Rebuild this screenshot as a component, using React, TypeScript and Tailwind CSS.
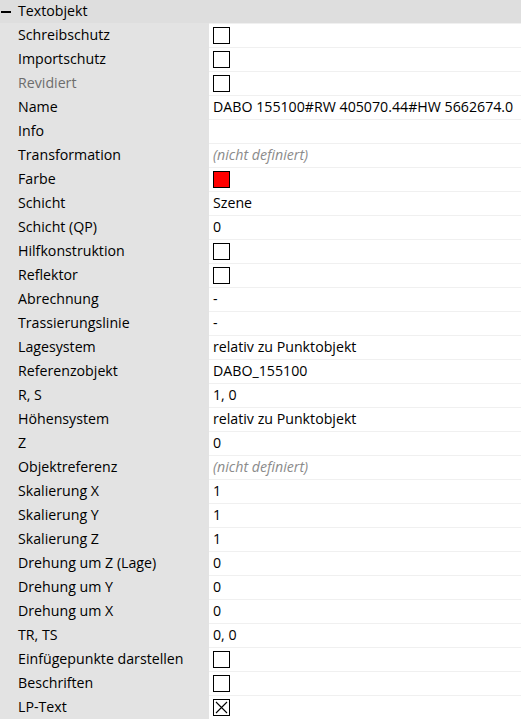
import React from 'react';

type Row = {
    label: string;
    kind: 'text' | 'check' | 'checked' | 'color' | 'undef' | 'empty';
    value?: string;
    muted?: boolean;
};

const rows: Row[] = [
    { label: 'Schreibschutz', kind: 'check' },
    { label: 'Importschutz', kind: 'check' },
    { label: 'Revidiert', kind: 'check', muted: true },
    { label: 'Name', kind: 'text', value: 'DABO 155100#RW 405070.44#HW 5662674.0' },
    { label: 'Info', kind: 'empty' },
    { label: 'Transformation', kind: 'undef' },
    { label: 'Farbe', kind: 'color' },
    { label: 'Schicht', kind: 'text', value: 'Szene' },
    { label: 'Schicht (QP)', kind: 'text', value: '0' },
    { label: 'Hilfkonstruktion', kind: 'check' },
    { label: 'Reflektor', kind: 'check' },
    { label: 'Abrechnung', kind: 'text', value: '-' },
    { label: 'Trassierungslinie', kind: 'text', value: '-' },
    { label: 'Lagesystem', kind: 'text', value: 'relativ zu Punktobjekt' },
    { label: 'Referenzobjekt', kind: 'text', value: 'DABO_155100' },
    { label: 'R, S', kind: 'text', value: '1, 0' },
    { label: 'Höhensystem', kind: 'text', value: 'relativ zu Punktobjekt' },
    { label: 'Z', kind: 'text', value: '0' },
    { label: 'Objektreferenz', kind: 'undef' },
    { label: 'Skalierung X', kind: 'text', value: '1' },
    { label: 'Skalierung Y', kind: 'text', value: '1' },
    { label: 'Skalierung Z', kind: 'text', value: '1' },
    { label: 'Drehung um Z (Lage)', kind: 'text', value: '0' },
    { label: 'Drehung um Y', kind: 'text', value: '0' },
    { label: 'Drehung um X', kind: 'text', value: '0' },
    { label: 'TR, TS', kind: 'text', value: '0, 0' },
    { label: 'Einfügepunkte darstellen', kind: 'check' },
    { label: 'Beschriften', kind: 'check' },
    { label: 'LP-Text', kind: 'checked' },
];

const ValueCell: React.FC<{ row: Row }> = ({ row }) => {
    switch (row.kind) {
        case 'check':
            return <div className="w-[17px] h-[17px] border border-black bg-white" />;
        case 'checked':
            return (
                <div className="w-[17px] h-[17px] border border-black bg-white">
                    <svg width="15" height="15" viewBox="0 0 15 15">
                        <path d="M2 2 L13 13 M13 2 L2 13" stroke="#000" strokeWidth="1.1" />
                    </svg>
                </div>
            );
        case 'color':
            return <div className="w-[17px] h-[17px] border border-black bg-[#ff0000]" />;
        case 'undef':
            return <span className="italic text-[#8b8b8b]">(nicht definiert)</span>;
        case 'empty':
            return null;
        default:
            return <span className="text-black">{row.value}</span>;
    }
};

const App: React.FC = () => {
    return (
        <div
            className="w-[521px] h-[719px] overflow-hidden bg-[#e3e3e3] text-[14.2px] leading-none"
            style={{ fontFamily: '"Open Sans", "Noto Sans", sans-serif' }}
        >
            <div className="h-[23px] bg-[#dedede] flex items-center">
                <div className="w-[18px] flex items-center pl-[1px]">
                    <div className="w-[10px] h-[2px] bg-black" />
                </div>
                <span className="text-black">Textobjekt</span>
            </div>
            {rows.map((row) => (
                <div key={row.label} className="flex h-[24px]">
                    <div
                        className={`w-[209px] shrink-0 pl-[18px] flex items-center ${row.muted ? 'text-[#6d6d6d]' : 'text-black'}`}
                    >
                        {row.label}
                    </div>
                    <div className="flex-1 bg-white border-t border-[#f0f0f0] flex items-center pl-[4px]">
                        <ValueCell row={row} />
                    </div>
                </div>
            ))}
        </div>
    );
};

export default App;
